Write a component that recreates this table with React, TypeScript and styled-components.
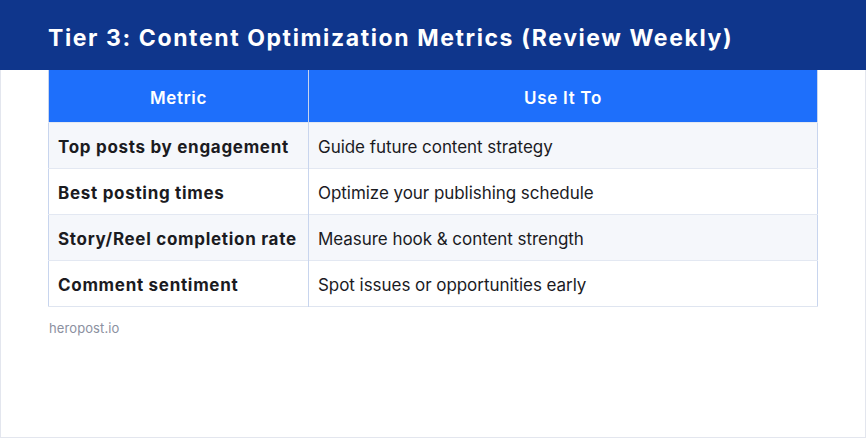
import React from "react";
import styled, { createGlobalStyle } from "styled-components";

const Global = createGlobalStyle`
  html, body { margin: 0; padding: 0; background: #ffffff; }
  body { font-family: "Inter", "Roboto", sans-serif; }
`;

const Frame = styled.div`
  box-sizing: border-box;
  width: 866px;
  height: 438px;
  border: 1px solid #e3e6ee;
  border-top: none;
  background: #ffffff;
  display: flex;
  flex-direction: column;
`;

const Banner = styled.header`
  box-sizing: border-box;
  background: #0f368c;
  height: 70px;
  margin: 0 -1px;
  padding: 5px 48px 0;
  display: flex;
  align-items: center;
`;

const Title = styled.h1`
  margin: 0;
  color: #ffffff;
  font-family: "Inter", sans-serif;
  font-weight: 700;
  font-size: 23px;
  letter-spacing: 1.6px;
`;

const Body = styled.div`
  padding: 0 47px;
  display: flex;
  flex-direction: column;
`;

const Table = styled.table`
  width: 770px;
  border-collapse: collapse;
  table-layout: fixed;
  border-left: 1px solid #c8d5ee;
  border-right: 1px solid #c8d5ee;
  border-bottom: 1px solid #dfe5f0;
`;

const HeadCell = styled.th<{ $w?: number }>`
  box-sizing: border-box;
  background: #1e6ffb;
  color: #ffffff;
  height: 52px;
  padding: 4px 10px 0;
  font-family: "Inter", sans-serif;
  font-weight: 600;
  font-size: 17px;
  letter-spacing: 0.7px;
  text-align: center;
  width: ${(p) => (p.$w ? `${p.$w}px` : "auto")};
  & + & { border-left: 1px solid #c8d5ee; }
`;

const Row = styled.tr<{ $alt: boolean }>`
  background: ${(p) => (p.$alt ? "#f5f7fb" : "#ffffff")};
  border-top: 1px solid #e3e8f2;
`;

const MetricCell = styled.td`
  box-sizing: border-box;
  height: 46px;
  padding: 3px 9px 0;
  font-family: "Inter", sans-serif;
  font-weight: 700;
  font-size: 17px;
  letter-spacing: 0.7px;
  color: #1b1b1f;
  white-space: nowrap;
  border-right: 1px solid #c8d5ee;
`;

const UseCell = styled.td`
  box-sizing: border-box;
  height: 46px;
  padding: 3px 9px 0;
  font-family: "Inter", sans-serif;
  font-weight: 400;
  font-size: 17px;
  letter-spacing: -0.05px;
  color: #1b1b1f;
  white-space: nowrap;
`;

const Footer = styled.div`
  margin-top: 13px;
  padding-left: 1px;
  font-family: "Inter", sans-serif;
  font-weight: 400;
  font-size: 13px;
  letter-spacing: 0.1px;
  color: #8b90a0;
`;

const rows = [
  ["Top posts by engagement", "Guide future content strategy"],
  ["Best posting times", "Optimize your publishing schedule"],
  ["Story/Reel completion rate", "Measure hook & content strength"],
  ["Comment sentiment", "Spot issues or opportunities early"],
];

export default function App() {
  return (
    <>
      <Global />
      <Frame>
        <Banner>
          <Title>Tier 3: Content Optimization Metrics (Review Weekly)</Title>
        </Banner>
        <Body>
          <Table>
            <thead>
              <tr>
                <HeadCell $w={260}>Metric</HeadCell>
                <HeadCell>Use It To</HeadCell>
              </tr>
            </thead>
            <tbody>
              {rows.map(([m, u], i) => (
                <Row key={m} $alt={i % 2 === 0}>
                  <MetricCell>{m}</MetricCell>
                  <UseCell>{u}</UseCell>
                </Row>
              ))}
            </tbody>
          </Table>
          <Footer>heropost.io</Footer>
        </Body>
      </Frame>
    </>
  );
}
